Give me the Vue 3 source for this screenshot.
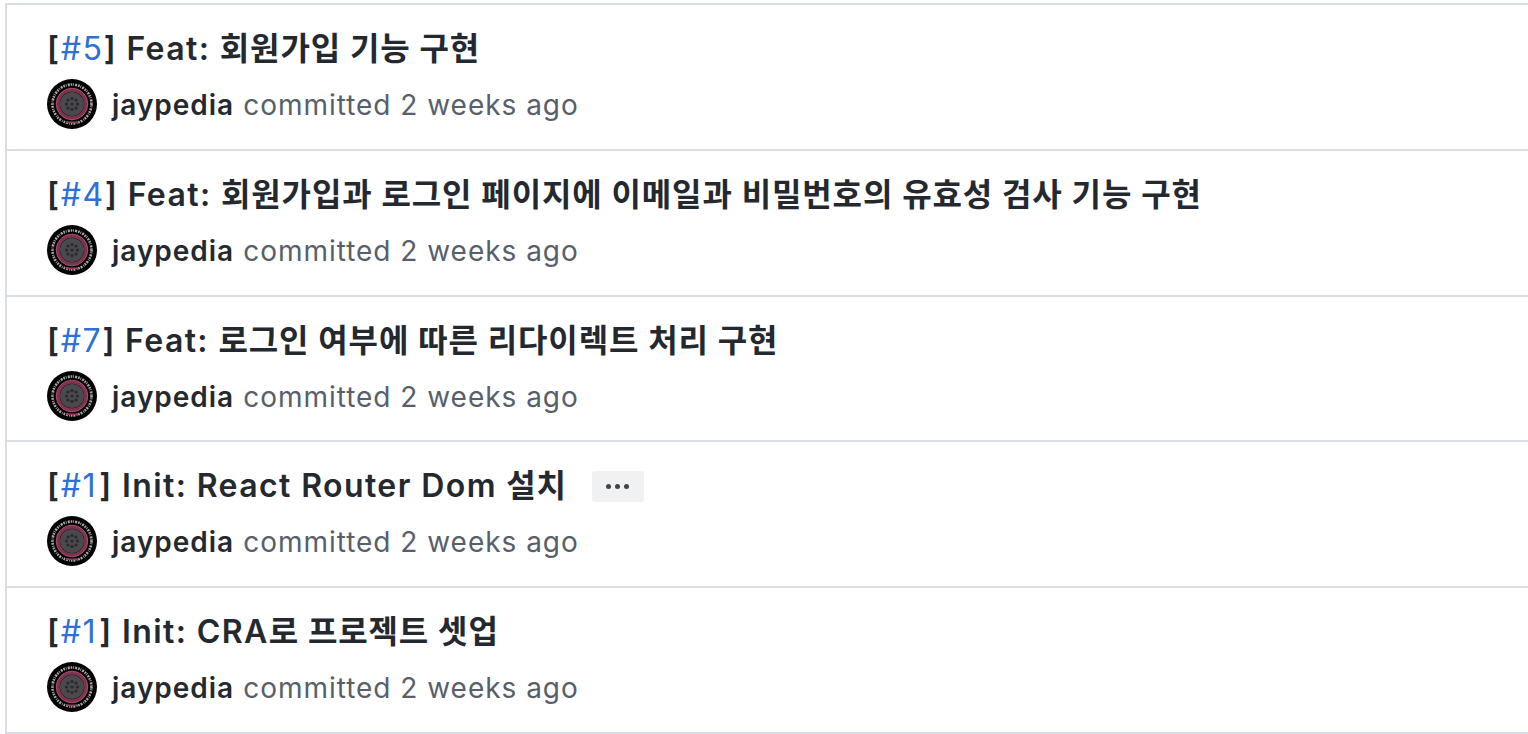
<script setup>
const raw = [
  { id: '#5', title: 'Feat: 회원가입 기능 구현' },
  { id: '#4', title: 'Feat: 회원가입과 로그인 페이지에 이메일과 비밀번호의 유효성 검사 기능 구현' },
  { id: '#7', title: 'Feat: 로그인 여부에 따른 리다이렉트 처리 구현' },
  { id: '#1', title: 'Init: React Router Dom 설치', more: true },
  { id: '#1', title: 'Init: CRA로 프로젝트 셋업' },
]
// Latin and Hangul runs have different tracking in the reference's system font.
const commits = raw.map((c) => ({
  ...c,
  runs: c.title.match(/[\uac00-\ud7a3 ]+|[^\uac00-\ud7a3]+/g),
}))
const isHangul = (run) => /[\uac00-\ud7a3]/.test(run)
const dots = [
  [21, 21], [25, 19.5], [29, 21], [19.5, 25], [25, 25], [30.5, 25], [21, 29], [25, 30.5], [29, 29],
]
</script>

<template>
  <main class="list">
    <section v-for="(c, i) in commits" :key="i" class="row">
      <h3 class="title">
        <span class="prefix"><span class="bracket">[</span><a class="issue" :class="{ wide: c.id === '#1' }">{{ c.id }}</a><span class="bracket">]</span></span>
        <span class="text"><span
          v-for="(run, j) in c.runs"
          :key="j"
          :class="isHangul(run) ? 'hangul' : 'latin'"
        >{{ run }}</span></span>
        <span v-if="c.more" class="more"><i></i><i></i><i></i></span>
      </h3>
      <div class="meta">
        <svg class="avatar" viewBox="0 0 50 50" aria-hidden="true">
          <circle cx="25" cy="25" r="25" fill="#000" />
          <circle cx="25" cy="25" r="19.5" fill="none" stroke="#a9a9a9" stroke-width="2.6" stroke-dasharray="1.6 0.9 0.8 1.2 2 1" />
          <circle cx="25" cy="25" r="14" fill="none" stroke="#7d3350" stroke-width="3.6" />
          <circle cx="25" cy="25" r="15.8" fill="none" stroke="#b8506f" stroke-width="0.9" />
          <circle cx="25" cy="25" r="12" fill="#4a494d" />
          <circle v-for="(d, k) in dots" :key="k" :cx="d[0]" :cy="d[1]" r="1.6" fill="#2a292c" />
          <rect x="19" y="42.5" width="12" height="1.6" fill="#9c3d62" />
        </svg>
        <span class="author">jaypedia</span>
        <span class="time">committed 2 weeks ago</span>
      </div>
    </section>
  </main>
</template>

<style>
html, body { margin: 0; background: #fff; overflow: hidden; }
</style>

<style scoped>
.list {
  margin: 3px 0 0 5px;
  border-left: 2px solid #d8dee4;
  width: 1523px;
  box-sizing: border-box;
  font-family: Inter, "Noto Sans CJK KR", sans-serif;
}
.row {
  box-sizing: border-box;
  height: 145.75px;
  border-top: 2px solid #d8dee4;
  padding: 20px 0 0 40px;
}
.row:last-child { border-bottom: 2px solid #d8dee4; height: 147.75px; }
.title {
  box-sizing: border-box;
  margin: 0;
  padding-top: 2px;
  display: flex;
  align-items: center;
  height: 46px;
  font-size: 32px;
  line-height: 44px;
  font-weight: 600;
  color: #24292f;
  white-space: pre-wrap;
}
.prefix { letter-spacing: 1.7px; }
.text { margin-left: 9px; }
.latin { letter-spacing: 1.4px; }
.hangul { letter-spacing: 0.87px; }
.issue { color: #2f6fd8; font-weight: 400; }
.issue.wide { padding-right: 2px; }
.more {
  display: inline-flex;
  align-items: center;
  justify-content: center;
  gap: 4px;
  width: 52px;
  height: 31px;
  margin-left: 25px;
  background: #eff1f3;
  border-radius: 3px;
}
.more i { width: 5px; height: 5px; border-radius: 50%; background: #3d444c; }
.meta {
  display: flex;
  align-items: center;
  margin-top: 8px;
  height: 50px;
  font-size: 28px;
  letter-spacing: 0.98px;
}
.avatar { width: 50px; height: 50px; flex: none; }
.author { margin-left: 15px; padding-top: 2px; font-weight: 600; color: #24292f; }
.time { margin-left: 9px; padding-top: 2px; color: #57606a; }
</style>
